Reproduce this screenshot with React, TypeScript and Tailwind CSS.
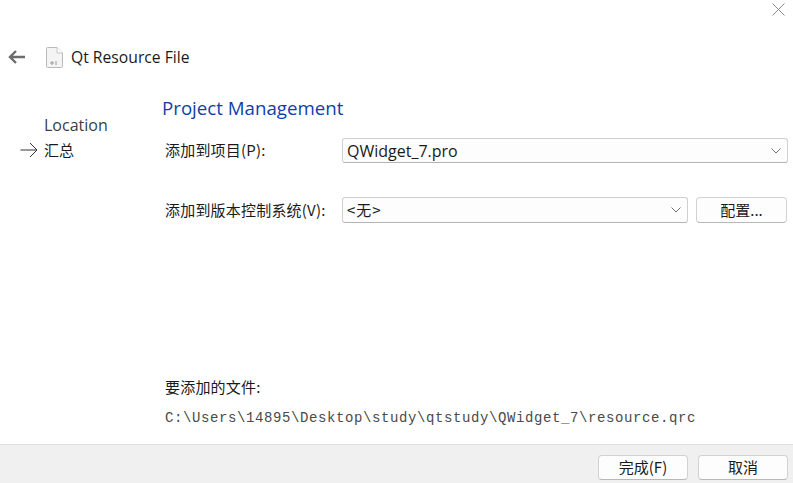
import React from 'react';

const cjk = "font-['Noto_Sans_CJK_SC',sans-serif]";
const latin = "font-['Open_Sans','Noto_Sans_CJK_SC',sans-serif]";

function Chevron() {
  return (
    <svg width="10" height="6" viewBox="0 0 10 6" fill="none" className="shrink-0">
      <path d="M0.5 0.5 L5 5 L9.5 0.5" stroke="#707070" strokeWidth="1" />
    </svg>
  );
}

function Combo({ label, className }: { label: string; className: string }) {
  return (
    <div className={`flex items-center justify-between rounded-[3px] border border-[#d0d0d0] border-b-[#b4b4b4] bg-[#fdfdfd] pl-[4px] pr-[6px] ${className}`}>
      <span className="text-[#1a1a1a]">{label}</span>
      <Chevron />
    </div>
  );
}

function Button({ label, className }: { label: string; className: string }) {
  return (
    <div className={`flex items-center justify-center rounded-[4px] border border-[#d2d2d2] border-b-[#b8b8b8] bg-[#fdfdfd] text-[15px] text-[#1a1a1a] ${cjk} ${className}`}>
      {label}
    </div>
  );
}

export default function App() {
  return (
    <div className={`flex h-[483px] w-[793px] flex-col overflow-hidden bg-white text-[15px] text-[#1a1a1a] ${latin}`}>
      {/* close */}
      <div className="flex h-[44px] justify-end pr-[8px] pt-[3px]">
        <svg width="13" height="13" viewBox="0 0 13 13" fill="none">
          <path d="M0.5 0.5 L12.5 12.5 M12.5 0.5 L0.5 12.5" stroke="#8c8c8c" strokeWidth="1" />
        </svg>
      </div>

      {/* header */}
      <div className="flex h-[26px] items-center">
        <svg width="18" height="14" viewBox="0 0 18 14" fill="none" className="ml-[8px]">
          <path d="M17 7 H2 M8 1 L2 7 L8 13" stroke="#6b6b6b" strokeWidth="2.4" />
        </svg>
        <svg width="17" height="21" viewBox="0 0 17 21" fill="none" className="ml-[20px]">
          <path d="M0.5 1.5 Q0.5 0.5 1.5 0.5 H11 L16.5 6 V19.5 Q16.5 20.5 15.5 20.5 H1.5 Q0.5 20.5 0.5 19.5 Z" fill="#f4f4f4" stroke="#b9b9b9" />
          <path d="M11 0.5 V6 H16.5" fill="#ffffff" stroke="#c6c6c6" />
          <path d="M5 15 H7 V17 H5 Z M9 15 H11 M9 17 H11" stroke="#9a9a9a" strokeWidth="1" />
        </svg>
        <span className="ml-[8px] mt-[2px] text-[15.7px]">Qt Resource File</span>
      </div>

      {/* body */}
      <div className="flex flex-1">
        <div className="w-[162px] shrink-0 pt-[41px]">
          <div className="h-[26px] pl-[44px] text-[16px] leading-[28px] text-[#3a3f45]">Location</div>
          <div className="flex h-[26px] items-center pl-[20px]">
            <svg width="18" height="16" viewBox="0 0 18 16" fill="none">
              <path d="M0.5 8 H17 M10 1 L17 8 L10 15" stroke="#333333" strokeWidth="1" />
            </svg>
            <span className={`ml-[6px] ${cjk}`}>汇总</span>
          </div>
        </div>

        <div className="flex flex-1 flex-col pr-[5px]">
          <div className="mt-[25px] h-[26px] text-[18.7px] leading-[26px] text-[#0f3fa8]">Project Management</div>
          <div className="mt-[17px] flex items-center">
            <div className={`w-[180px] pl-[3px] tracking-[0.2px] ${cjk}`}>添加到项目(P):</div>
            <Combo label="QWidget_7.pro" className="h-[25px] flex-1 text-[16px]" />
          </div>
          <div className="mt-[34px] flex items-center">
            <div className={`w-[180px] pl-[3px] tracking-[0.2px] ${cjk}`}>添加到版本控制系统(V):</div>
            <Combo label="<无>" className={`h-[26px] w-[346px] tracking-[1px] ${cjk}`} />
            <Button label="配置..." className="ml-[8px] h-[26px] w-[91px]" />
          </div>
          <div className={`mt-auto pl-[3px] tracking-[0.2px] ${cjk}`}>要添加的文件:</div>
          <div className="mb-[18px] mt-[12px] pl-[3px] font-['Liberation_Mono',monospace] text-[14px] leading-[16px] tracking-[0.6px] text-[#4a4a4a]">
            C:\Users\14895\Desktop\study\qtstudy\QWidget_7\resource.qrc
          </div>
        </div>
      </div>

      {/* footer */}
      <div className="flex h-[39px] shrink-0 justify-end gap-[10px] border-t border-[#dfdfdf] bg-[#f0f0f0] pr-[5px] pt-[10px]">
        <Button label="完成(F)" className="h-[25px] w-[90px]" />
        <Button label="取消" className="h-[25px] w-[90px]" />
      </div>
    </div>
  );
}
